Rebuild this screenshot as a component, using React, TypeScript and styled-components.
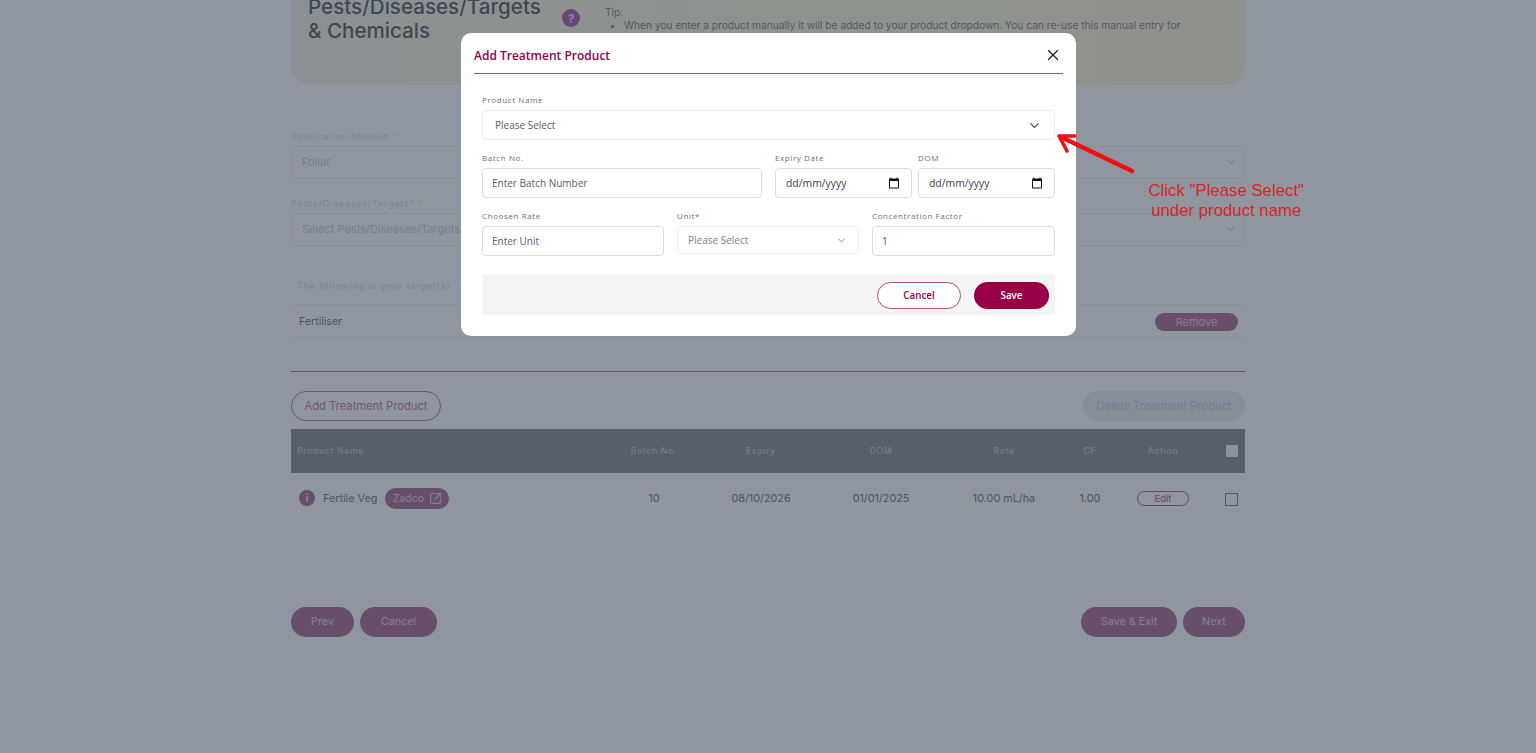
import React from "react";
import styled, { createGlobalStyle } from "styled-components";
import { ChevronDown, X, SquareArrowOutUpRight } from "lucide-react";

const Global = createGlobalStyle`
  html, body { margin: 0; padding: 0; height: 100%; background: #fff; overflow: hidden; }
  * { box-sizing: border-box; }
  body { font-family: Inter, "Liberation Sans", sans-serif; color: #78787a; }
`;

const PINK = "#ae7090";
const MAROON = "#970045";

const Page = styled.div`
  width: 954px;
  height: 753px;
  margin: 0 auto;
  overflow: hidden;
  display: flex;
  flex-direction: column;
`;

const TipCard = styled.section`
  flex: none;
  height: 115px;
  margin-top: -30px;
  padding: 23px 50px 0 17px;
  border-radius: 0 0 20px 20px;
  background: linear-gradient(90deg, #f6f3e6, #fff9d8 60%, #fff6d6);
  display: flex;
`;

const TipTitle = styled.h1`
  width: 254px;
  margin: 2px 0 0;
  font-size: 20.6px;
  line-height: 24px;
  font-weight: 500;
  color: #606064;
  flex: none;
`;

const Help = styled.span`
  width: 18px;
  height: 18px;
  margin: 16px 25px 0 0;
  border-radius: 50%;
  background: #b05ea8;
  color: #f3d9ee;
  font-size: 12px;
  font-weight: 700;
  display: flex;
  align-items: center;
  justify-content: center;
  flex: none;
`;

const TipBody = styled.div`
  padding-top: 13px;
  font-size: 10.2px;
  line-height: 12.5px;
  color: #85857f;
  p { margin: 0; }
  ul { margin: 0; padding-left: 19px; }
`;

const Label = styled.label`
  display: block;
  font-size: 9px;
  line-height: 12px;
  letter-spacing: 0.85px;
  color: #dadde5;
  b { color: #eec; font-weight: 400; }
`;

const FieldGroup = styled.div<{ $top: number }>`
  margin-top: ${(p) => p.$top}px;
  flex: none;
`;

const BackSelect = styled.div`
  height: 33px;
  margin-top: 3px;
  padding: 0 7px 2px 10px;
  border: 1px solid #f0eff4;
  border-radius: 4px;
  display: flex;
  align-items: center;
  justify-content: space-between;
  font-size: 11px;
  color: #cdd0d8;
  svg { color: #b8bdc8; }
`;

const TargetHead = styled.div`
  height: 32px;
  margin-top: 27px;
  padding: 6px 6px 0;
  border-bottom: 1px solid #eef0f4;
  font-size: 9px;
  line-height: 14px;
  letter-spacing: 0.85px;
  color: #d8dbe2;
  flex: none;
`;

const TargetRow = styled.div`
  height: 33px;
  padding: 0 7px 0 8px;
  border-bottom: 1px solid #eef0f4;
  display: flex;
  align-items: center;
  justify-content: space-between;
  font-size: 10.6px;
  color: #78787a;
  flex: none;
`;

const RemoveButton = styled.span`
  width: 83px;
  height: 18px;
  margin-top: 2px;
  border-radius: 9px;
  background: ${PINK};
  color: #e8d2dc;
  font-size: 11px;
  display: flex;
  align-items: center;
  justify-content: center;
`;

const Divider = styled.hr`
  width: 100%;
  margin: 33px 0 0;
  border: 0;
  border-top: 1px solid #c4709a;
  flex: none;
`;

const ActionBar = styled.div`
  margin-top: 19px;
  display: flex;
  justify-content: space-between;
  flex: none;
`;

const OutlineButton = styled.button`
  width: 150px;
  height: 30px;
  padding: 0;
  border: 1px solid #c07a9c;
  border-radius: 15px;
  background: transparent;
  color: #c080a2;
  font: 11.2px Inter, sans-serif;
`;

const DisabledButton = styled.button`
  width: 162px;
  height: 30px;
  padding: 0;
  border: 0;
  border-radius: 15px;
  background: #edeff2;
  color: #c7ccd4;
  font: 11.2px Inter, sans-serif;
`;

const columns = "309px 108px 106px 134px 112px 60px 86px 39px";

const TableHead = styled.div`
  height: 44px;
  margin-top: 8px;
  display: grid;
  grid-template-columns: ${columns};
  align-items: center;
  background: #8f9092;
  color: #c8c9cc;
  font-size: 8.6px;
  font-weight: 500;
  letter-spacing: 0.7px;
  text-align: center;
  flex: none;
`;

const TableRow = styled.div`
  height: 50px;
  display: grid;
  grid-template-columns: ${columns};
  align-items: center;
  color: #78787a;
  font-size: 10.8px;
  text-align: center;
  flex: none;
`;

const HeadName = styled.span`
  padding-left: 6px;
  text-align: left;
`;

const NameCell = styled.div`
  padding-left: 8px;
  display: flex;
  align-items: center;
`;

const InfoDot = styled.span`
  width: 16px;
  height: 16px;
  margin-right: 8px;
  border-radius: 50%;
  background: ${PINK};
  color: #f3d9ee;
  font-size: 10px;
  font-weight: 700;
  display: flex;
  align-items: center;
  justify-content: center;
`;

const Pill = styled.span`
  width: 64px;
  height: 21px;
  margin-left: 8px;
  border-radius: 10.5px;
  background: ${PINK};
  color: #e8d3dd;
  font-size: 10.6px;
  display: flex;
  align-items: center;
  justify-content: center;
  gap: 5px;
`;

const EditButton = styled.span`
  width: 52px;
  height: 15px;
  margin: 0 auto;
  border: 1px solid #b5608a;
  border-radius: 8px;
  color: #b5608a;
  font-size: 9.5px;
  line-height: 13px;
`;

const Box = styled.span<{ $filled?: boolean }>`
  width: ${(p) => (p.$filled ? 12 : 13)}px;
  height: ${(p) => (p.$filled ? 12 : 13)}px;
  margin: ${(p) => (p.$filled ? 0 : "2px")} 7px 0 auto;
  border: ${(p) => (p.$filled ? "0" : "1px solid #85878f")};
  background: ${(p) => (p.$filled ? "#f4f5f7" : "transparent")};
  display: block;
`;

const Footer = styled.div`
  margin-top: 84px;
  display: flex;
  justify-content: space-between;
  flex: none;
`;

const ButtonGroup = styled.div`
  display: flex;
  gap: 6px;
`;

const SolidPill = styled.button<{ $w: number }>`
  width: ${(p) => p.$w}px;
  height: 30px;
  padding: 0 0 1px;
  border: 0;
  border-radius: 15px;
  background: ${PINK};
  color: #e8d2dc;
  font: 10.8px Inter, sans-serif;
`;

const Overlay = styled.div`
  position: fixed;
  inset: 0;
  background: rgba(31, 45, 65, 0.5);
`;

const Modal = styled.div`
  position: fixed;
  left: 461px;
  top: 33px;
  width: 615px;
  height: 303px;
  padding: 0 13px;
  border-radius: 10px;
  background: #fff;
  font-family: "Open Sans", sans-serif;
`;

const ModalHeader = styled.header`
  height: 41px;
  padding: 3px 1px 0 0;
  border-bottom: 1px solid #b8437a;
  display: flex;
  align-items: center;
  justify-content: space-between;
  svg { color: #1f2328; }
`;

const ModalTitle = styled.h2`
  margin: 2px 0 0;
  font-size: 12px;
  font-weight: 600;
  color: #970045;
`;

const ModalBody = styled.div`
  padding: 20px 8px 0;
`;

const FormRow = styled.div<{ $cols: string; $gap: number }>`
  margin-top: 12px;
  display: grid;
  grid-template-columns: ${(p) => p.$cols};
  column-gap: ${(p) => p.$gap}px;
`;

const BatchField = styled.div`
  padding-right: 7px;
`;

const FieldLabel = styled.label`
  display: block;
  height: 16px;
  font-size: 8px;
  line-height: 12px;
  letter-spacing: 0.6px;
  color: #6a707b;
  b { color: #e0405a; font-weight: 400; }
`;

const Select = styled.div`
  height: 30px;
  padding: 0 12px;
  border: 1px solid #ebedf1;
  border-radius: 4px;
  display: flex;
  align-items: center;
  justify-content: space-between;
  font-size: 10px;
  color: #59606b;
  svg { color: #3c424c; }
`;

const Input = styled.input`
  width: 100%;
  height: 30px;
  padding: 0 9px;
  border: 1px solid #d9dce3;
  border-radius: 4px;
  outline: 0;
  background: #fff;
  font: 10px "Open Sans", sans-serif;
  color: #0f6674;
  &::placeholder { color: #59606b; opacity: 1; }
`;

const DateBox = styled.div`
  height: 30px;
  padding: 0 11px 0 10px;
  border: 1px solid #d9dce3;
  border-radius: 4px;
  display: flex;
  align-items: center;
  justify-content: space-between;
  font-size: 10.4px;
  color: #3b424c;
`;

const UnitSelect = styled.div`
  height: 28px;
  padding: 0 11px 0 10px;
  border: 1px solid #eceef2;
  border-radius: 4px;
  display: flex;
  align-items: center;
  justify-content: space-between;
  font-size: 10px;
  color: #7c828c;
  svg { color: #7c828c; }
`;

const ModalFooter = styled.div`
  height: 40px;
  margin-top: 19px;
  padding: 0 6px;
  background: #f3f4f6;
  display: flex;
  align-items: center;
  justify-content: flex-end;
  gap: 13px;
`;

const ModalCancel = styled.button`
  width: 84px;
  height: 27px;
  padding: 0;
  border: 1px solid #b5487b;
  border-radius: 14px;
  background: #fff;
  color: #970045;
  font: 600 9.8px "Open Sans", sans-serif;
`;

const ModalSave = styled.button`
  width: 75px;
  height: 27px;
  padding: 0;
  border: 0;
  border-radius: 14px;
  background: ${MAROON};
  color: #fff;
  font: 600 9.8px "Open Sans", sans-serif;
`;

const ArrowMark = styled.svg`
  position: fixed;
  left: 1050px;
  top: 125px;
`;

const Note = styled.div`
  position: fixed;
  left: 1126px;
  top: 181px;
  width: 200px;
  font-family: "Liberation Sans", Arial, sans-serif;
  font-size: 16.8px;
  line-height: 20px;
  text-align: center;
  color: #e81c20;
`;

const CalendarIcon = () => (
  <svg width="12" height="12" viewBox="0 0 24 24" fill="#111">
    <path d="M20 3h-1V1h-2v2H7V1H5v2H4c-1.1 0-2 .9-2 2v16c0 1.1.9 2 2 2h16c1.1 0 2-.9 2-2V5c0-1.1-.9-2-2-2zm0 18H4V8h16v13z" />
  </svg>
);

export default function App() {
  return (
    <>
      <Global />
      <Page>
        <TipCard>
          <TipTitle>Pests/Diseases/Targets<br />&amp; Chemicals</TipTitle>
          <Help>?</Help>
          <TipBody>
            <p>Tip:</p>
            <ul>
              <li>When you enter a product manually it will be added to your product dropdown. You can re-use this manual entry for</li>
            </ul>
          </TipBody>
        </TipCard>

        <FieldGroup $top={46}>
          <Label>Application Method <b>*</b></Label>
          <BackSelect>Foliar <ChevronDown size={12} /></BackSelect>
        </FieldGroup>
        <FieldGroup $top={19}>
          <Label>Pests/Diseases/Targets* <b>*</b></Label>
          <BackSelect>Select Pests/Diseases/Targets <ChevronDown size={12} /></BackSelect>
        </FieldGroup>

        <TargetHead>The following is your target(s)</TargetHead>
        <TargetRow>
          Fertiliser
          <RemoveButton>Remove</RemoveButton>
        </TargetRow>

        <Divider />
        <ActionBar>
          <OutlineButton>Add Treatment Product</OutlineButton>
          <DisabledButton>Delete Treatment Product</DisabledButton>
        </ActionBar>

        <TableHead>
          <HeadName>Product Name</HeadName>
          <span>Batch No.</span>
          <span>Expiry</span>
          <span>DOM</span>
          <span>Rate</span>
          <span>CF</span>
          <span>Action</span>
          <Box $filled />
        </TableHead>
        <TableRow>
          <NameCell>
            <InfoDot>i</InfoDot>
            Fertile Veg
            <Pill>Zadco <SquareArrowOutUpRight size={13} /></Pill>
          </NameCell>
          <span>10</span>
          <span>08/10/2026</span>
          <span>01/01/2025</span>
          <span>10.00 mL/ha</span>
          <span>1.00</span>
          <EditButton>Edit</EditButton>
          <Box />
        </TableRow>

        <Footer>
          <ButtonGroup>
            <SolidPill $w={63}>Prev</SolidPill>
            <SolidPill $w={77}>Cancel</SolidPill>
          </ButtonGroup>
          <ButtonGroup>
            <SolidPill $w={96}>Save &amp; Exit</SolidPill>
            <SolidPill $w={62}>Next</SolidPill>
          </ButtonGroup>
        </Footer>
      </Page>

      <Overlay />

      <Modal>
        <ModalHeader>
          <ModalTitle>Add Treatment Product</ModalTitle>
          <X size={18} strokeWidth={1.7} />
        </ModalHeader>
        <ModalBody>
          <FieldLabel>Product Name</FieldLabel>
          <Select>Please Select <ChevronDown size={15} strokeWidth={1.8} /></Select>

          <FormRow $cols="287px 137px 137px" $gap={6}>
            <BatchField>
              <FieldLabel>Batch No.</FieldLabel>
              <Input placeholder="Enter Batch Number" />
            </BatchField>
            <div>
              <FieldLabel>Expiry Date</FieldLabel>
              <DateBox>dd/mm/yyyy <CalendarIcon /></DateBox>
            </div>
            <div>
              <FieldLabel>DOM</FieldLabel>
              <DateBox>dd/mm/yyyy <CalendarIcon /></DateBox>
            </div>
          </FormRow>

          <FormRow $cols="182px 182px 183px" $gap={13}>
            <div>
              <FieldLabel>Choosen Rate</FieldLabel>
              <Input placeholder="Enter Unit" />
            </div>
            <div>
              <FieldLabel>Unit<b>*</b></FieldLabel>
              <UnitSelect>Please Select <ChevronDown size={11} /></UnitSelect>
            </div>
            <div>
              <FieldLabel>Concentration Factor</FieldLabel>
              <Input defaultValue="1" />
            </div>
          </FormRow>

          <ModalFooter>
            <ModalCancel>Cancel</ModalCancel>
            <ModalSave>Save</ModalSave>
          </ModalFooter>
        </ModalBody>
      </Modal>

      <ArrowMark width="90" height="55" viewBox="0 0 90 55" fill="none" stroke="#f01010" strokeLinecap="round" strokeLinejoin="round">
        <path d="M82 46 L11 12" strokeWidth="4.6" />
        <path d="M9 11 L25 11 M9 11 L17 26" strokeWidth="3.6" />
      </ArrowMark>
      <Note>
        Click "Please Select"
        <br />
        under product name
      </Note>
    </>
  );
}
